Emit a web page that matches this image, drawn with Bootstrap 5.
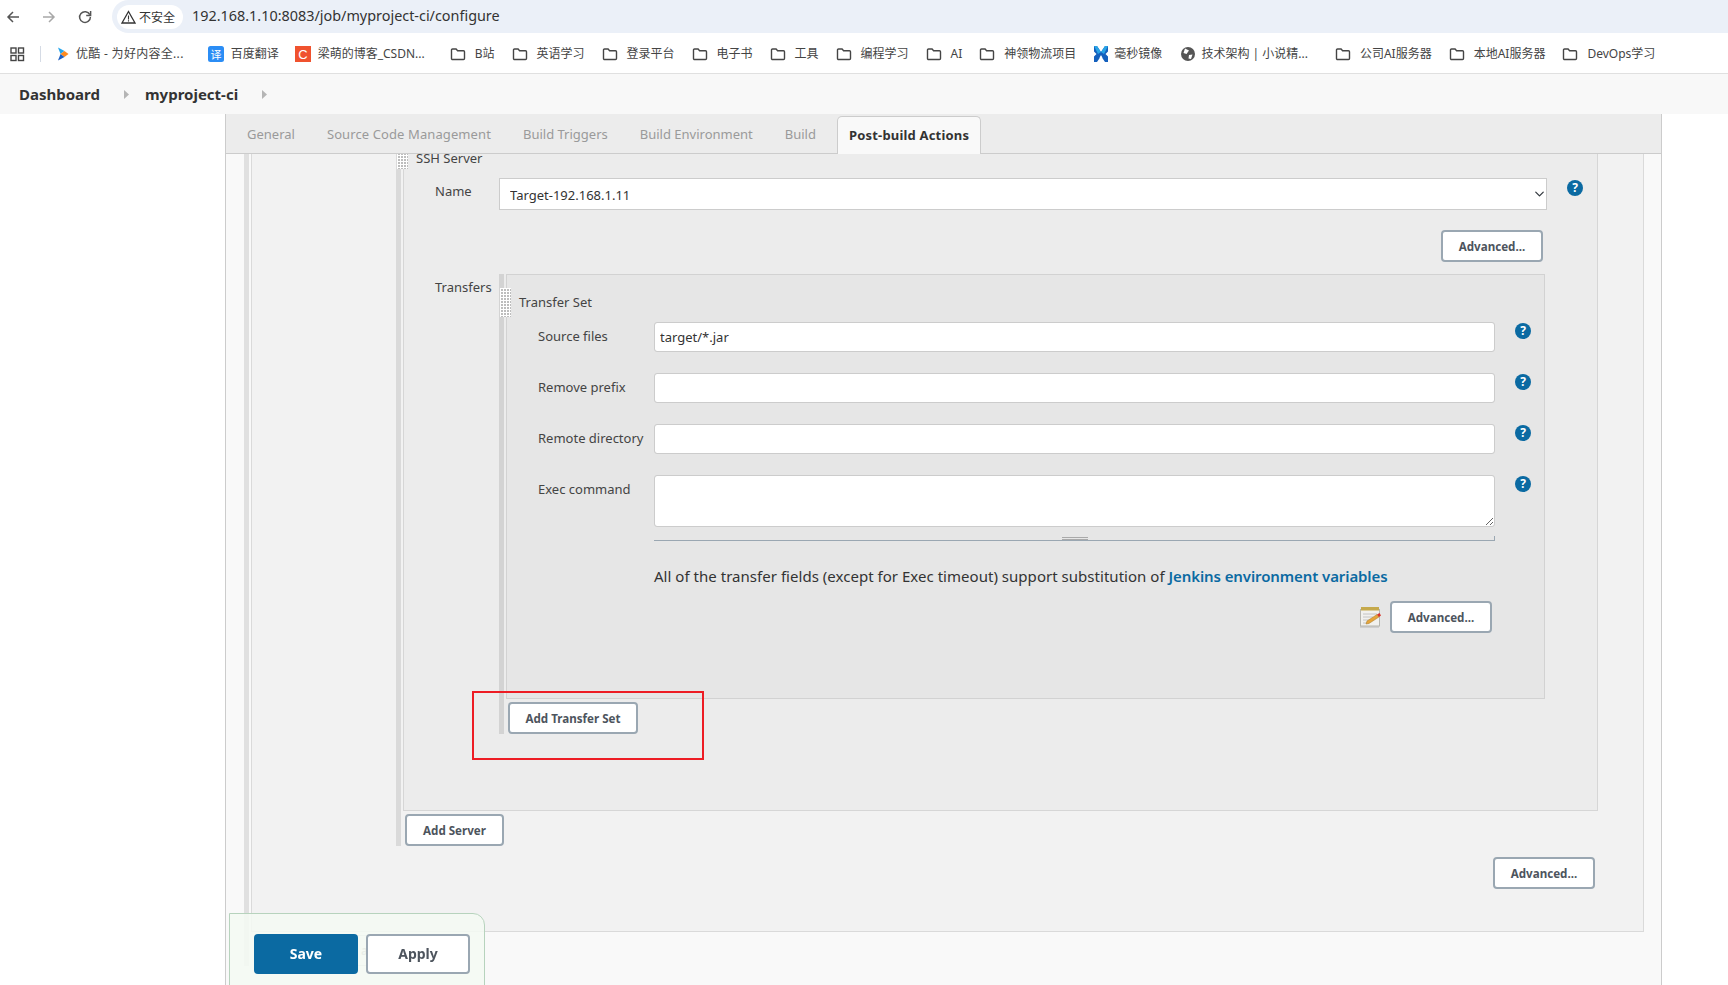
<!DOCTYPE html>
<html lang="zh-CN">
<head>
<meta charset="utf-8">
<title>myproject-ci Config</title>
<link rel="stylesheet" href="https://cdn.jsdelivr.net/npm/bootstrap@5.3.0/dist/css/bootstrap.min.css">
<style>
html,body{height:985px;overflow:hidden;background:#fff}
body{font-family:"Noto Sans","Noto Sans CJK SC",sans-serif;color:#333;font-size:13px}
.bw-top{height:33px}
.bw-nav{width:112px;flex:none}
.bw-back{margin-left:6px}
.bw-fwd{margin-left:22px}
.bw-rel{margin-left:22px}
.bw-pill{flex:1;background:#ebf0f8;border-radius:17px 0 0 17px;padding-left:5px}
.bw-sec{background:#fff;border-radius:12px;height:24px;width:66px;padding-left:4px;font-size:12px;color:#333;font-family:"Noto Sans CJK SC",sans-serif;gap:3px}
.bw-url{font-size:14.4px;margin-left:9px;color:#333;line-height:20px;margin-top:-2px}
.bw-marks{height:41px;border-bottom:1px solid #e0e0e0;font-size:12px;font-family:"Noto Sans","Noto Sans CJK SC",sans-serif;color:#444;padding:1px 0 0 9px;white-space:nowrap}
.bw-sep{width:1px;height:16px;background:#d5dbe5;margin:0 14px 0 15px}
.bw-item{gap:5px;margin-right:18px}
.bw-fold{gap:9px;margin-right:17px}
.bw-more1{margin-right:24px;letter-spacing:.3px}
.bw-wide{gap:7px;margin-right:16px}
.bw-more2{gap:7px;margin-right:25px}
.bw-last{margin-right:27px}
.bw-ic{width:16px;height:16px;flex:none}
.jk-crumb{height:40px;background:#f8f8f8;padding-left:19px;font-size:15px;font-weight:700;color:#333}
.jk-tri{margin:0 16px 0 24px}
.jk-main{margin-left:225px;width:1437px;height:871px;border-left:1px solid #ccc;border-right:1px solid #ccc;background:#f9f9f9;overflow:hidden;display:flex;flex-direction:column;position:relative}
.jk-tabs{height:40px;flex:none;background:#ececec;border-bottom:1px solid #ccc;padding-left:10px;padding-top:2px;gap:10px;--bs-nav-tabs-border-width:0;position:relative;z-index:2;flex-wrap:nowrap;border-top:0}
.jk-tabs .nav-link{padding:0 11px;height:37px;line-height:37px;color:#9a9a9a;font-size:13px;border:0;background:none}
.jk-tabs .nav-link.jk-tab-w{letter-spacing:.1px}
.jk-tabs .nav-link.active{background:#f9f9f9;color:#333;font-weight:700;border:1px solid #ccc;border-bottom:0;border-radius:5px 5px 0 0;height:38px;line-height:36px;letter-spacing:.18px}
.jk-body{padding:0 17px 0 18px;flex:1}
.jk-group{border-left:5px solid #e0e0e0;padding-left:2px}
.jk-group-s{border-left-color:#dadada}
.jk-group-t{border-left-color:#d3d3d3}
.jk-outer{background:#f2f2f2;border:1px solid #dadada;border-top:0;padding:0 45px 42px 144px}
.jk-ssh{background:#ececec;border:1px solid #d6d6d6;border-top:0;padding:0 0 76px 31px;position:relative}
.jk-grip{position:absolute;width:11px;background-color:#bdbdbd;background-image:linear-gradient(#fff 1px,transparent 1px),linear-gradient(90deg,#fff 1px,transparent 1px);background-size:3px 3px}
.jk-grip-a{left:-7px;top:0;height:20px}
.jk-grip-b{left:-7px;top:13px;height:29px}
.jk-title{line-height:18px;margin-left:-19px;margin-top:-5px;color:#444}
.jk-namerow{margin-top:11px}
.jk-label{width:64px;flex:none;line-height:18px;color:#444}
.jk-label-w{width:116px;flex:none;line-height:18px;color:#444;margin-top:5px}
.jk-field{border:1px solid #ccc;border-radius:3px;background-color:#fff;font-size:13px;color:#333;height:30px;padding:0 5px;box-shadow:none;font-family:inherit}
.jk-field:focus{border-color:#ccc;box-shadow:none}
.jk-sel{width:1048px;height:32px;border-radius:0;padding:3px 10px 0;background-position:right 0 center;background-size:13px 10px;font-size:13px;border:1px solid #ccc;color:#333;font-family:inherit}
.jk-help{width:16px;height:16px;border-radius:50%;background:#0b6aa2;color:#fff;font-weight:700;font-size:12px;line-height:16px;text-align:center;flex:none}
.jk-help-s{margin:2px 0 0 20px}
.jk-help-w{margin:1px 0 0 20px}
.jk-btn{background:#fff;border:2px solid #9aa7b2;border-radius:4px;color:#4d545d;font-weight:700;font-size:11.6px;height:32px;padding:1px 0 0;line-height:28px}
.jk-btn-adv{width:102px}
.jk-adv-a{margin:20px 54px 0 0}
.jk-trow{margin-top:12px}
.jk-tset{background:#e6e6e6;border:1px solid #d2d2d2;width:1039px;height:425px;padding:18px 0 0 12px;position:relative}
.jk-tset-wrap{position:relative}
.jk-sub{line-height:18px;color:#444;margin-bottom:11px}
.jk-wrow{padding-left:19px;margin-bottom:21px}
.jk-in{width:841px}
.jk-area{width:841px;height:52px;border-radius:3px;display:block;resize:both}
.jk-wrow-x{margin-top:1px;margin-bottom:0}
.jk-bar{width:841px;height:5px;margin:9px 0 0 135px;border-bottom:1px solid #9aa7b2;border-right:1px solid #9aa7b2;position:relative}
.jk-barg{position:absolute;left:408px;top:1px;width:26px;height:3px;border-top:1px solid #a9a9a9;border-bottom:1px solid #a9a9a9}
.jk-desc{margin:25px 0 0 135px;font-size:15px;line-height:20px;color:#333;white-space:nowrap;letter-spacing:.03px}
.jk-desc a{color:#0b6aa2;font-weight:600;text-decoration:none;letter-spacing:-.1px}
.jk-tact{gap:8px;margin:15px 52px 0 0}
.jk-add-t{width:130px;margin:3px 0 0 2px;display:block}
.jk-add-s{width:99px;margin:3px 0 0 2px;display:block}
.jk-adv-c{margin:11px 3px 0 0}
.jk-add-p{width:159px;height:31px;margin:3px 0 1px 11px;display:block;border:1px solid #cfd3d6;text-align:left;padding-left:98px;color:#9a9a9a;font-weight:600}
.jk-red{position:absolute;left:246px;top:577px;width:232px;height:69px;border:2px solid #ed1c24;z-index:3}
.jk-bottom{position:fixed;left:229px;top:913px;width:256px;height:80px;border:1px solid #b7d3bd;border-radius:0 12px 0 0;background:rgba(244,249,242,.88);padding:20px 0 0 24px;gap:8px;z-index:5}
.jk-save,.jk-apply{width:104px;height:40px;font-size:14px;font-weight:700;border-radius:4px;padding:0 0 2px}
.jk-save{background:#0b6aa2;color:#fff;border:0}
.jk-apply{background:#fff;border:2px solid #9aa7b2;color:#4d545d}
</style>
</head>
<body>
<svg width="0" height="0" class="position-absolute">
  <symbol id="fold" viewBox="0 0 16 16"><path d="M1.5 4a1 1 0 0 1 1-1h3.600l1.500 1.700h5.900a1 1 0 0 1 1 1v6.800a1 1 0 0 1-1 1h-11a1 1 0 0 1-1-1z" fill="none" stroke="#454545" stroke-width="1.4"/></symbol>
</svg>

<div class="bw-top d-flex">
  <div class="bw-nav d-flex align-items-center">
    <svg class="bw-back" width="14" height="14" viewBox="0 0 14 14"><path d="M13 7H2M7 2 2 7l5 5" fill="none" stroke="#555" stroke-width="1.5"/></svg>
    <svg class="bw-fwd" width="14" height="14" viewBox="0 0 14 14"><path d="M1 7h11M7 2l5 5-5 5" fill="none" stroke="#a8a8a8" stroke-width="1.5"/></svg>
    <svg class="bw-rel" width="14" height="14" viewBox="0 0 14 14"><path d="M11.8 4.600A5.400 5.400 0 1 0 12.400 7" fill="none" stroke="#555" stroke-width="1.5"/><path d="M12.600 1v4.400H8.200" fill="none" stroke="#555" stroke-width="1.5"/></svg>
  </div>
  <div class="bw-pill d-flex align-items-center">
    <div class="bw-sec d-flex align-items-center">
      <svg width="15" height="14" viewBox="0 0 15 14"><path d="M7.500 1.500 14 13H1z" fill="none" stroke="#333" stroke-width="1.300"/><path d="M7.500 5.500v4M7.500 10.300v1.300" stroke="#333" stroke-width="1.100"/></svg>
      <span>不安全</span>
    </div>
    <span class="bw-url">192.168.1.10:8083/job/myproject-ci/configure</span>
  </div>
</div>

<div class="bw-marks d-flex align-items-center">
  <svg width="16" height="16" viewBox="0 0 16 16"><g fill="none" stroke="#444" stroke-width="1.400"><rect x="2" y="2" width="5" height="5"/><rect x="9.500" y="2" width="5" height="5"/><rect x="2" y="9.500" width="5" height="5"/><rect x="9.500" y="9.500" width="5" height="5"/></g></svg>
  <div class="bw-sep"></div>
  <div class="bw-item bw-more1 d-flex align-items-center"><svg class="bw-ic" viewBox="0 0 16 16"><path d="M3 1.500 9.500 5 5.500 8z" fill="#25a6ee"/><path d="M5.500 8 9.500 5 13.500 8 9.500 11z" fill="#ff8a1f"/><path d="M3 14.500 5.500 8 9.500 11z" fill="#1d5fc2"/></svg><span>优酷 - 为好内容全...</span></div>
  <div class="bw-wide d-flex align-items-center"><svg class="bw-ic" viewBox="0 0 16 16"><rect width="16" height="16" rx="2.500" fill="#2b8df5"/><text x="8" y="12.500" font-size="11" fill="#fff" text-anchor="middle" font-family="Noto Sans CJK SC">译</text></svg><span>百度翻译</span></div>
  <div class="bw-more2 d-flex align-items-center"><svg class="bw-ic" viewBox="0 0 16 16"><rect width="16" height="16" fill="#f0522e"/><text x="8" y="13" font-size="13" fill="#fff" text-anchor="middle" font-family="Liberation Sans">C</text></svg><span>梁萌的博客_CSDN...</span></div>
  <div class="bw-fold d-flex align-items-center"><svg class="bw-ic"><use href="#fold"/></svg><span>B站</span></div>
  <div class="bw-fold d-flex align-items-center"><svg class="bw-ic"><use href="#fold"/></svg><span>英语学习</span></div>
  <div class="bw-fold d-flex align-items-center"><svg class="bw-ic"><use href="#fold"/></svg><span>登录平台</span></div>
  <div class="bw-fold d-flex align-items-center"><svg class="bw-ic"><use href="#fold"/></svg><span>电子书</span></div>
  <div class="bw-fold d-flex align-items-center"><svg class="bw-ic"><use href="#fold"/></svg><span>工具</span></div>
  <div class="bw-fold d-flex align-items-center"><svg class="bw-ic"><use href="#fold"/></svg><span>编程学习</span></div>
  <div class="bw-fold d-flex align-items-center"><svg class="bw-ic"><use href="#fold"/></svg><span>AI</span></div>
  <div class="bw-fold d-flex align-items-center"><svg class="bw-ic"><use href="#fold"/></svg><span>神领物流项目</span></div>
  <div class="bw-item d-flex align-items-center"><svg class="bw-ic" viewBox="0 0 16 16"><path d="M1 0h3l4 6 4-6h3v16h-3l-4-6-4 6H1z" fill="#1460bd"/><path d="M1 0h3l4 6-3 2zM15 0h-3L8 6l3 2z" fill="#29a4e6"/><path d="M1 5.500 3.500 8 1 10.500zM15 5.500 12.500 8 15 10.500zM8 9l1.500 3h-3z" fill="#fff"/></svg><span>毫秒镜像</span></div>
  <div class="bw-item bw-last d-flex align-items-center"><svg class="bw-ic" viewBox="0 0 16 16"><circle cx="8" cy="8" r="7" fill="#555"/><path d="M5 2.500 9 4.500 6.500 8l-3-1zM9 9l3.500-.5L11 13l-2.500-.5z" fill="#fff"/></svg><span>技术架构 | 小说精...</span></div>
  <div class="bw-fold d-flex align-items-center"><svg class="bw-ic"><use href="#fold"/></svg><span>公司AI服务器</span></div>
  <div class="bw-fold d-flex align-items-center"><svg class="bw-ic"><use href="#fold"/></svg><span>本地AI服务器</span></div>
  <div class="bw-fold d-flex align-items-center"><svg class="bw-ic"><use href="#fold"/></svg><span>DevOps学习</span></div>
</div>

<div class="jk-crumb d-flex align-items-center">
  <span>Dashboard</span>
  <svg class="jk-tri" width="5" height="9" viewBox="0 0 5 9"><path d="M0 0l5 4.500L0 9z" fill="#b5b5b5"/></svg>
  <span>myproject-ci</span>
  <svg class="jk-tri" width="5" height="9" viewBox="0 0 5 9"><path d="M0 0l5 4.500L0 9z" fill="#b5b5b5"/></svg>
</div>

<div class="jk-main">
  <ul class="nav nav-tabs jk-tabs">
    <li class="nav-item"><a class="nav-link" href="#">General</a></li>
    <li class="nav-item"><a class="nav-link jk-tab-w" href="#">Source Code Management</a></li>
    <li class="nav-item"><a class="nav-link" href="#">Build Triggers</a></li>
    <li class="nav-item"><a class="nav-link" href="#">Build Environment</a></li>
    <li class="nav-item"><a class="nav-link" href="#">Build</a></li>
    <li class="nav-item"><a class="nav-link active" href="#">Post-build Actions</a></li>
  </ul>
  <div class="jk-body">
    <div class="jk-group">
      <div class="jk-outer">
        <div class="jk-group jk-group-s">
          <div class="jk-ssh">
            <div class="jk-grip jk-grip-a"></div>
            <div class="jk-title">SSH Server</div>
            <div class="d-flex jk-namerow">
              <div class="jk-label mt-1">Name</div>
              <select class="form-select jk-sel"><option>Target-192.168.1.11</option></select>
              <div class="jk-help jk-help-s">?</div>
            </div>
            <div class="d-flex justify-content-end"><button class="jk-btn jk-btn-adv jk-adv-a">Advanced...</button></div>
            <div class="d-flex jk-trow">
              <div class="jk-label pt-1">Transfers</div>
              <div class="jk-tset-wrap">
                <div class="jk-group jk-group-t">
                  <div class="jk-tset">
                    <div class="jk-grip jk-grip-b"></div>
                    <div class="jk-sub">Transfer Set</div>
                    <div class="d-flex jk-wrow">
                      <div class="jk-label-w">Source files</div>
                      <input class="form-control jk-field jk-in" value="target/*.jar">
                      <div class="jk-help jk-help-w">?</div>
                    </div>
                    <div class="d-flex jk-wrow">
                      <div class="jk-label-w">Remove prefix</div>
                      <input class="form-control jk-field jk-in">
                      <div class="jk-help jk-help-w">?</div>
                    </div>
                    <div class="d-flex jk-wrow">
                      <div class="jk-label-w">Remote directory</div>
                      <input class="form-control jk-field jk-in">
                      <div class="jk-help jk-help-w">?</div>
                    </div>
                    <div class="d-flex jk-wrow jk-wrow-x">
                      <div class="jk-label-w">Exec command</div>
                      <textarea class="form-control jk-field jk-area"></textarea>
                      <div class="jk-help jk-help-w">?</div>
                    </div>
                    <div class="jk-bar"><div class="jk-barg"></div></div>
                    <div class="jk-desc">All of the transfer fields (except for Exec timeout) support substitution of <a href="#">Jenkins environment variables</a></div>
                    <div class="d-flex justify-content-end align-items-center jk-tact">
                      <svg width="23" height="22" viewBox="0 0 23 22"><rect x="1" y="20" width="19" height="2" fill="#cfcfcf"/><rect x="1.500" y="3.500" width="19" height="16.500" fill="#f1f1ee" stroke="#b5b5ae"/><rect x="2" y="1" width="18" height="3.500" fill="#c5a94c"/><path d="M4 8h14M4 11h10M4 14h8M4 17h6" stroke="#c4c4c4"/><path d="M7 18l1-3 10-6.500 2 2.500-10 6.500z" fill="#e6a53a" stroke="#a97a25" stroke-width=".5"/><path d="M18 8.500l2.500-1.500 1.500 2.500-2 1.500z" fill="#d8352a"/></svg>
                      <button class="jk-btn jk-btn-adv">Advanced...</button>
                    </div>
                  </div>
                  <button class="jk-btn jk-add-t">Add Transfer Set</button>
                </div>
              </div>
            </div>
          </div>
          <button class="jk-btn jk-add-s">Add Server</button>
        </div>
        <div class="d-flex justify-content-end"><button class="jk-btn jk-btn-adv jk-adv-c">Advanced...</button></div>
      </div>
      <button class="jk-btn jk-add-p">a</button>
    </div>
  </div>
  <div class="jk-red"></div>
</div>

<div class="jk-bottom d-flex">
  <button class="btn jk-save">Save</button>
  <button class="btn jk-apply">Apply</button>
</div>
<script src="https://cdn.jsdelivr.net/npm/bootstrap@5.3.0/dist/js/bootstrap.bundle.min.js"></script>
</body>
</html>
